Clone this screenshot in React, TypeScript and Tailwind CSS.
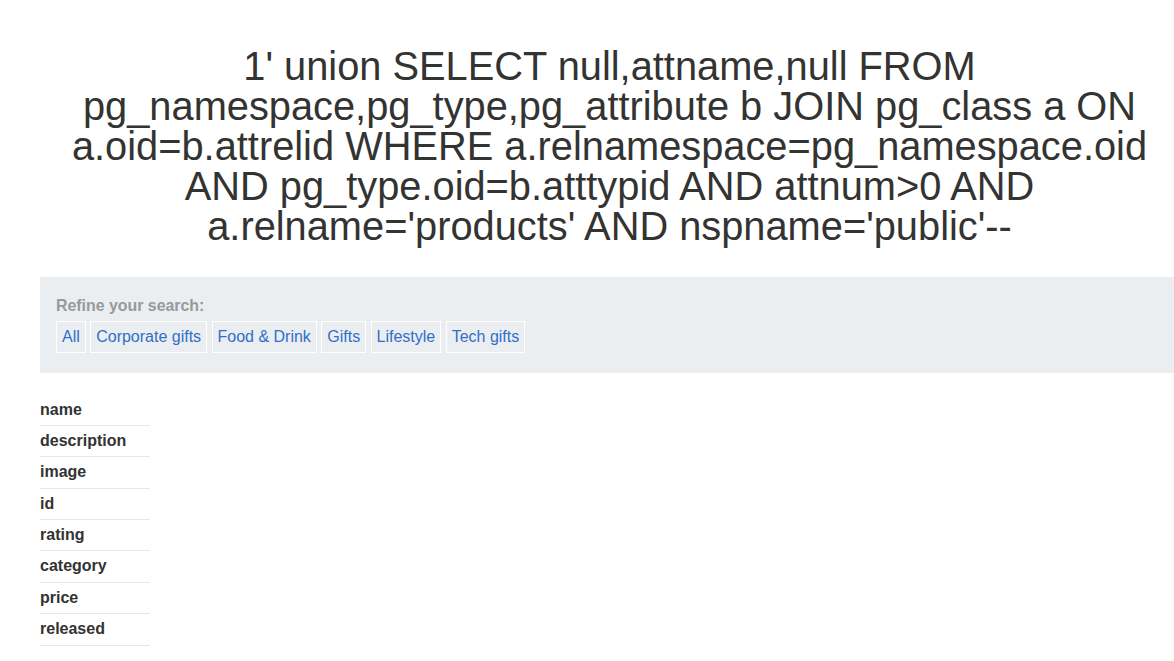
export default function App() {
  const filters = ['All', 'Corporate gifts', 'Food & Drink', 'Gifts', 'Lifestyle', 'Tech gifts'];
  const columns = ['name', 'description', 'image', 'id', 'rating', 'category', 'price', 'released'];

  return (
    <div className="min-h-screen overflow-hidden bg-white text-[#333332] font-['Liberation_Sans',Arial,sans-serif]">
      <main className="pl-[40px]">
        <h1 className="pt-[46px] w-[1139px] text-center text-[39.8px] leading-[40px] font-normal">
          1' union SELECT null,attname,null FROM pg_namespace,pg_type,pg_attribute b JOIN pg_class a ON
          a.oid=b.attrelid WHERE a.relnamespace=pg_namespace.oid AND pg_type.oid=b.atttypid AND attnum&gt;0
          AND a.relname='products' AND nspname='public'--
        </h1>

        <section className="mt-[31px] bg-[#ebeef1] px-[16px] pt-[17px] pb-[20px]">
          <div className="text-[15.9px] leading-6 font-bold text-[#999999]">Refine your search:</div>
          <div className="mt-[3px] flex gap-[4.4px]">
            {filters.map((f) => (
              <a
                key={f}
                href="#"
                className="h-[32px] flex items-center px-[5px] border border-white text-[16px] text-[#2f6fc8]"
              >
                {f}
              </a>
            ))}
          </div>
        </section>

        <table className="mt-[21.5px] w-[110px] border-collapse">
          <tbody>
            {columns.map((c) => (
              <tr key={c} className="border-b border-[#e6e6e6]">
                <th className="py-[4px] text-left text-[16px] leading-[1.4] font-bold">{c}</th>
              </tr>
            ))}
          </tbody>
        </table>
      </main>
    </div>
  );
}
